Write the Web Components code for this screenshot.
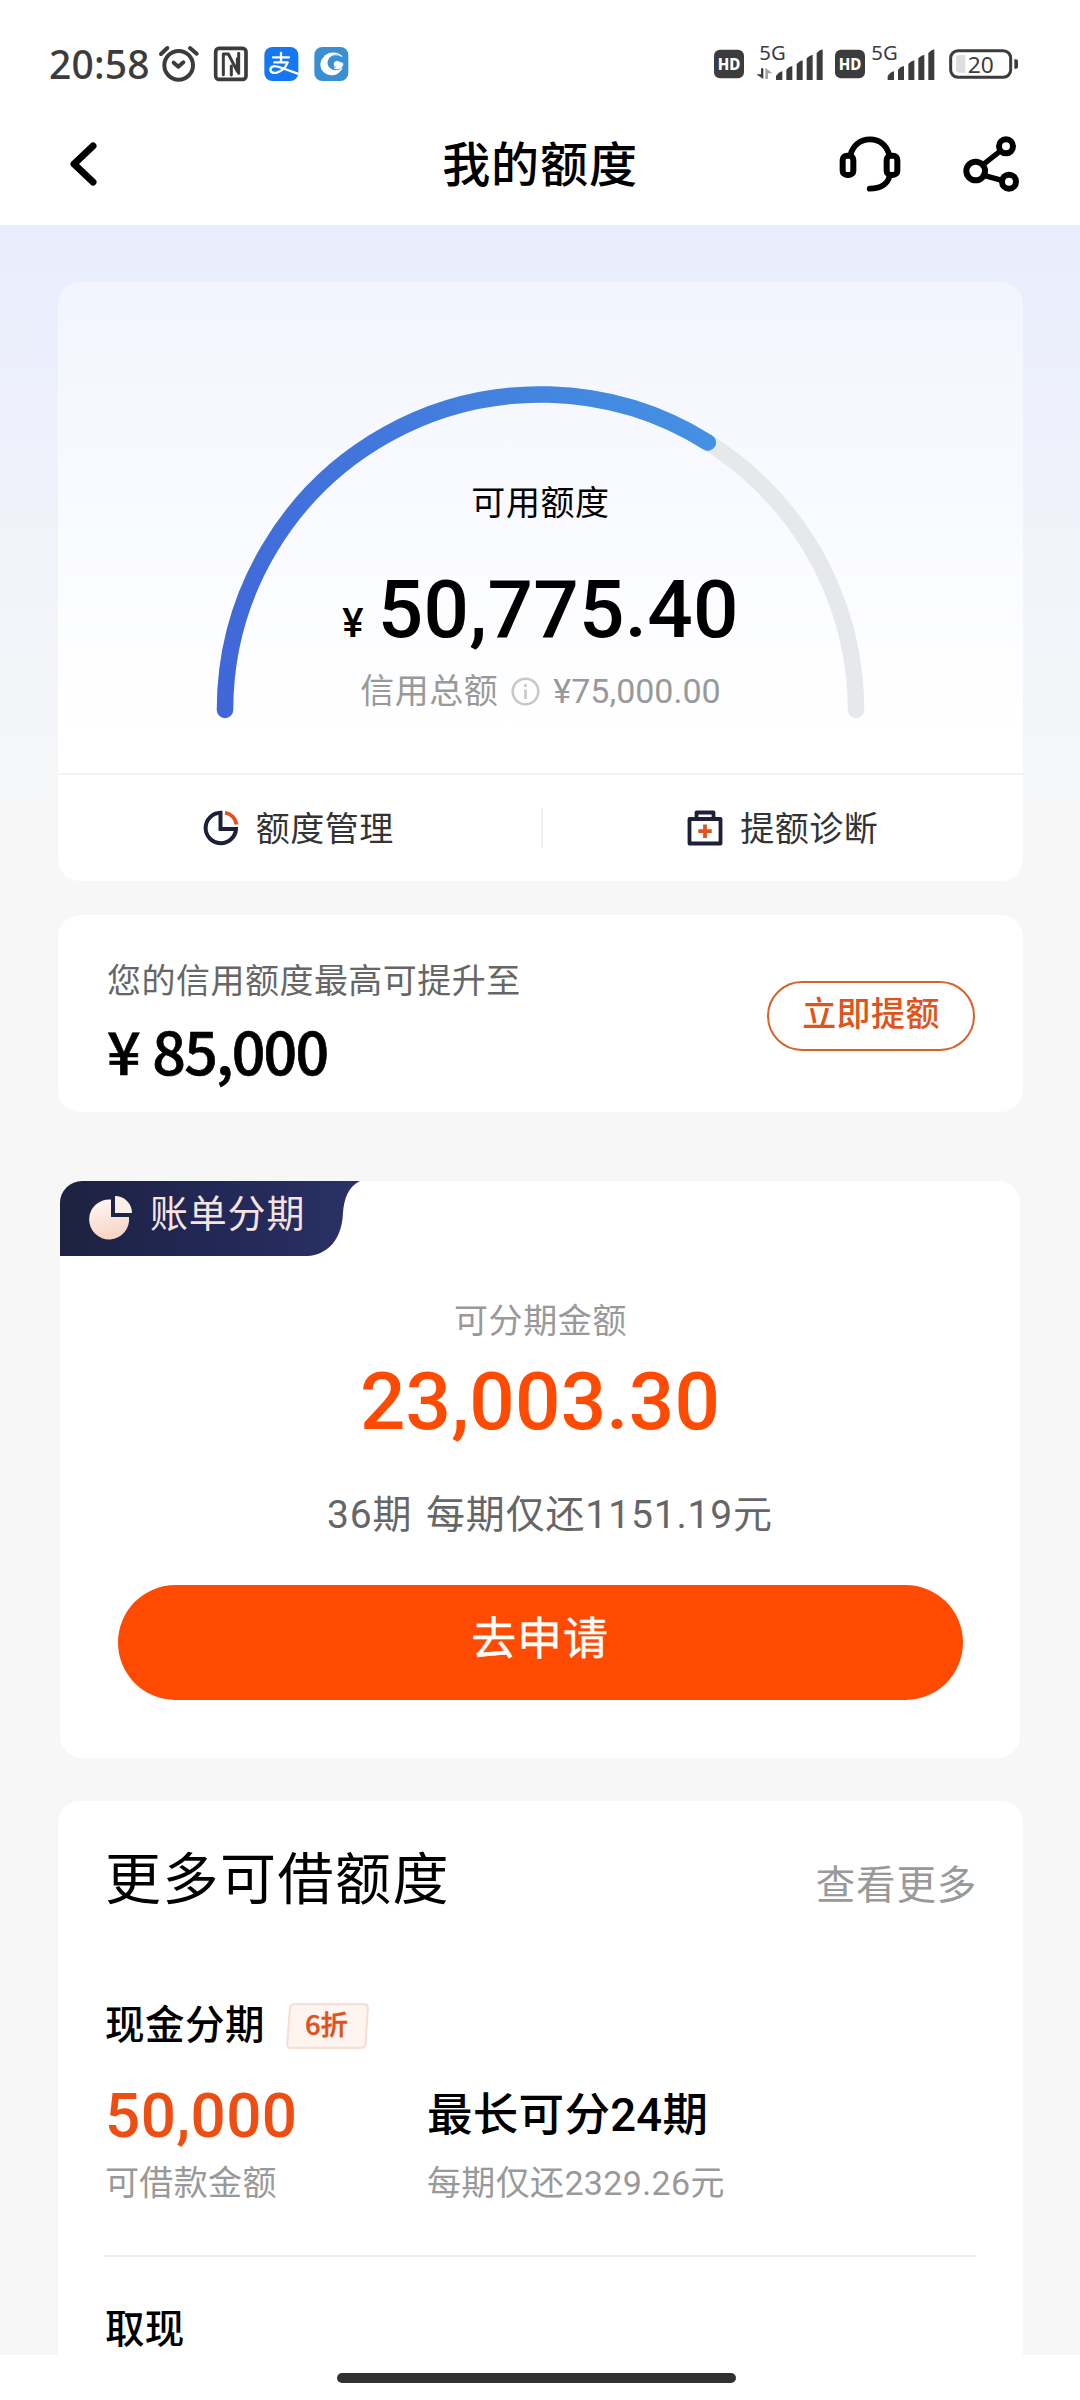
<!DOCTYPE html>
<html lang="zh-CN">
<head>
<meta charset="utf-8">
<title>我的额度</title>
<style>
  html, body { margin: 0; padding: 0; }
  body {
    width: 1080px; height: 2400px; overflow: hidden; background: #fff; color: #000;
    font-family: Roboto, "Noto Sans CJK SC", sans-serif;
  }
</style>
</head>
<body>
<quota-app></quota-app>

<script>
function define(name, html) {
  const tpl = document.createElement('template');
  tpl.innerHTML = '<style>*{box-sizing:border-box}</style>' + html;
  customElements.define(name, class extends HTMLElement {
    constructor() {
      super();
      this.attachShadow({ mode: 'open' }).appendChild(tpl.content.cloneNode(true));
    }
  });
}

define('status-bar', `
  <style>
    :host { display: flex; justify-content: space-between; align-items: flex-start; height: 103px; padding: 30px 40px 0 49px; color: #3c3c3c; }
    .left { display: flex; }
    .time { font: 500 39px/70px "Noto Sans", sans-serif; width: 106.7px; letter-spacing: 0.2px; margin-top: -1px; }
    svg { display: block; }
  </style>
  <div class="left">
    <span class="time">20:58</span>
    <svg width="200" height="70" viewBox="380 0 600 210" fill="none" stroke="#3c3c3c" stroke-linecap="round" stroke-linejoin="round">
      <circle cx="448" cy="106" r="43" stroke-width="12"/>
      <path d="M395 72L414 54M482 54L502 71" stroke-width="12"/>
      <path d="M433 98L447 110L462 97" stroke-width="12"/>
      <rect x="559" y="55" width="91" height="93" rx="10" stroke-width="11"/>
      <path d="M582 134V72H597L624 124V86" stroke-width="9"/>
      <path d="M628 70V130M606 108V135" stroke-width="9"/>
      <rect x="705" y="51" width="102" height="102" rx="24" fill="#1677f5" stroke="none"/>
      <g stroke="#fff" stroke-width="7">
        <path d="M731 82H779M755 69V97M735 97H775C769 112 757 124 742 128C728 131 721 124 724 115C728 106 744 108 758 114L805 131"/>
      </g>
      <rect x="855" y="51" width="102" height="102" rx="24" fill="#3a8fd3" stroke="none"/>
      <path d="M932 79C904 60 873 78 873 104C874 130 905 146 929 128C935 123 939 118 940 112C929 122 913 124 903 115C891 104 893 88 904 80C912 74 922 75 932 79Z" fill="#fff" stroke="none"/>
      <path d="M914 99C919 92 928 93 932 98C938 96 943 100 940 107C936 116 921 120 914 114C922 114 922 108 914 108" fill="#fff" stroke="#fff" stroke-width="2"/>
      <path d="M886 79C902 66 922 66 937 79" stroke="#fff" stroke-width="4"/>
    </svg>
  </div>
  <svg width="328" height="70" viewBox="36 0 984 210" fill="#3c3c3c" font-family="Noto Sans, sans-serif">
    <defs>
      <g id="hd"><rect x="42" y="59" width="90" height="86" rx="18"/><text x="87" y="120" text-anchor="middle" font-size="46" font-weight="800" fill="#fff" textLength="68" lengthAdjust="spacingAndGlyphs">HD</text></g>
      <g id="sig">
        <path d="M228 150V138Q236 126 247 124V150ZM259 150V119Q267 109 277 108V150ZM290 150V102Q298 93 308 91V150ZM320 150V85Q328 76 338 74V150ZM350 150V69Q358 60 368 58V150Z"/>
      </g>
    </defs>
    <use href="#hd"/>
    <text x="178" y="89" font-size="61" textLength="79" lengthAdjust="spacingAndGlyphs">5G</text>
    <path d="M183 115H190V147L169 133H183Z"/><path d="M196 147V113L217 130H204V147Z" fill="#a4a4a4"/>
    <use href="#sig"/>
    <use href="#hd" x="363"/>
    <text x="514" y="89" font-size="61" textLength="79" lengthAdjust="spacingAndGlyphs">5G</text>
    <use href="#sig" x="335"/>
    <rect x="752" y="62" width="180" height="80" rx="22" fill="none" stroke="#3c3c3c" stroke-width="9"/>
    <path d="M780 75H796V128H780Q768 128 768 116V87Q768 75 780 75Z" fill="#dedede"/>
    <text x="803" y="128" font-size="64" textLength="78" lengthAdjust="spacingAndGlyphs">20</text>
    <path d="M943 88H948Q954 88 954 94V110Q954 116 948 116H943Z"/>
  </svg>
`);

define('nav-bar', `
  <style>
    :host { display: grid; grid-template-columns: 260px 1fr 260px; align-items: center; height: 122px; }
    .title { text-align: center; font-weight: 500; font-size: 48px; line-height: 60px; letter-spacing: .9px; padding-top: 3px; }
    .back { margin-left: 64px; display: block; }
    svg { display: block; }
  </style>
  <svg class="back" width="40" height="56" viewBox="0 0 40 56" fill="none" stroke="#000" stroke-width="7" stroke-linecap="round" stroke-linejoin="round"><path d="M29 10L10 28L29 46"/></svg>
  <div class="title"><slot></slot></div>
  <svg width="210" height="80" viewBox="0 -3 630 240" fill="none" stroke="#000">
    <rect x="68" y="92" width="32" height="58" rx="13" stroke-width="18"/>
    <rect x="200" y="92" width="32" height="58" rx="13" stroke-width="18"/>
    <path d="M91 92C97 62 121 43 150 43C179 43 202 62 208 92M209 152C204 175 184 191 149 191" stroke-width="17" stroke-linecap="round"/>
    <circle cx="467" cy="138" r="28" stroke-width="18"/>
    <circle cx="558" cy="64" r="21" stroke-width="18"/>
    <circle cx="567" cy="170" r="21" stroke-width="18"/>
    <path d="M490 118L541 78M494 152L546 166" stroke-width="16"/>
  </svg>
`);

define('limit-gauge', `
  <style>
    :host { display: grid; height: 491px; }
    .arc, .info { grid-area: 1 / 1; }
    .info { display: flex; flex-direction: column; align-items: center; padding-top: 197px; }
    .label { font-size: 34px; line-height: 48px; letter-spacing: .6px; }
    .amount { margin-top: 38px; height: 90px; line-height: 90px; font-size: 80px; font-weight: 500; display: flex; align-items: baseline; gap: 14px; letter-spacing: .3px; }
    .amount small { font-size: 40px; line-height: 40px; }
    .total { margin-top: 12px; font-size: 34px; line-height: 48px; color: #999; display: flex; align-items: center; gap: 13px; }
    .total span { letter-spacing: .5px; }
  </style>
  <svg class="arc" width="965" height="491" viewBox="0 0 965 491" fill="none" stroke-width="16.500" stroke-linecap="round">
    <defs><linearGradient id="arc" gradientUnits="userSpaceOnUse" x1="167" y1="428" x2="649" y2="161"><stop stop-color="#4066d8"/><stop offset=".5" stop-color="#4278dd"/><stop offset="1" stop-color="#4490e2"/></linearGradient></defs>
    <path d="M167 428A315.500 315.500 0 0 1 798 428" stroke="#e7e8ea"/>
    <path d="M167 428A315.500 315.500 0 0 1 649.800 160.500" stroke="url(#arc)"/>
  </svg>
  <div class="info">
    <div class="label"><slot name="label"></slot></div>
    <div class="amount"><small>¥</small><slot name="amount"></slot></div>
    <div class="total"><span><slot name="total-label"></slot></span>
      <svg width="29" height="29" viewBox="0 0 29 29" fill="none" stroke="#c8c8c8" stroke-width="2.600"><circle cx="14.500" cy="14.500" r="12.800"/><path d="M14.500 12.500V22M14.500 7V10"/></svg>
      <slot name="total"></slot></div>
  </div>
`);

define('quick-action', `
  <style>
    :host { flex: 1; display: flex; justify-content: center; align-items: center; gap: 17px; font-size: 34px; line-height: 48px; letter-spacing: .5px; color: #333; }
    ::slotted(svg) { display: block; }
    span { padding-top: 2px; }
  </style>
  <slot name="icon"></slot><span><slot></slot></span>
`);

define('quota-card', `
  <style>
    :host { display: block; height: 599px; border-radius: 22px; overflow: hidden; background: linear-gradient(#f2f5fe 0, #fafbff 42%, #fff 75%); }
    .actions { display: flex; align-items: center; height: 108px; border-top: 2px solid #f3f3f3; }
    .sep { width: 2px; height: 40px; background: #f1f1f1; }
    quick-action:first-child { padding-right: 2px; }
  </style>
  <limit-gauge>
    <span slot="label">可用额度</span><span slot="amount">50,775.40</span>
    <span slot="total-label">信用总额</span><span slot="total">¥75,000.00</span>
  </limit-gauge>
  <div class="actions">
    <quick-action>
      <svg slot="icon" width="36" height="36" viewBox="0 0 36 36" fill="none" stroke-width="4"><path d="M17.500 2.800A15.200 15.200 0 1 0 33 19H17.500Z" stroke="#1c2038"/><path d="M22 2.600A14.500 14.500 0 0 1 33.500 14.500" stroke="#e0531f"/></svg>
      额度管理</quick-action>
    <div class="sep"></div>
    <quick-action>
      <svg slot="icon" width="36" height="36" viewBox="0 0 36 36" fill="none" stroke-width="3.800" stroke-linejoin="round"><path d="M2.500 9H33.500V33.500H2.500ZM9.500 9V2.500H26.500V9" stroke="#1c2038"/><path d="M18 14.500V28M11.300 21.200H24.700" stroke="#e0531f"/></svg>
      提额诊断</quick-action>
  </div>
`);

define('raise-card', `
  <style>
    :host { display: flex; justify-content: space-between; height: 197px; margin-top: 34px; padding: 0 48px 0 49px; border-radius: 22px; background: #fff; }
    .hint { margin-top: 42px; font-size: 34px; line-height: 48px; letter-spacing: .48px; color: #666; }
    .sum { margin-top: 5px; font: 500 59px/80px "Noto Sans CJK SC", sans-serif; letter-spacing: -1.800px; word-spacing: 2px; -webkit-text-stroke: .7px #000; }
    .btn { margin-top: 66px; width: 208px; height: 70px; border: 2px solid #d8622c; border-radius: 35px; color: #e0541a; font-weight: 500; font-size: 34px; line-height: 62px; letter-spacing: .4px; text-align: center; }
  </style>
  <div><div class="hint"><slot name="hint"></slot></div><div class="sum"><slot name="sum"></slot></div></div>
  <div class="btn"><slot name="action"></slot></div>
`);

define('bill-card', `
  <style>
    :host { display: flex; flex-direction: column; align-items: center; width: 960px; height: 577px; margin: 69px 0 0 2px; border-radius: 22px; overflow: hidden; background: #fff; }
    .tag { align-self: flex-start; display: grid; width: 300px; height: 75px; }
    .tag > * { grid-area: 1 / 1; }
    .tag span { padding-left: 90px; font-size: 38px; line-height: 67px; letter-spacing: .8px; color: #f5e3e2; }
    .label { margin-top: 41px; font-size: 34px; line-height: 48px; letter-spacing: .6px; color: #999; padding-left: 1px; }
    .amount { margin-top: 12px; font-size: 80px; font-weight: 500; line-height: 90px; color: #fe4b01; letter-spacing: .2px; }
    .plan { margin-top: 40px; font-size: 39px; line-height: 56px; letter-spacing: .85px; word-spacing: 3px; color: #666; padding-left: 20px; white-space: pre; }
    .btn { margin-top: 42px; width: 845px; height: 115px; border-radius: 58px; background: #ff4b02; color: #fff; font-size: 45px; line-height: 109px; letter-spacing: .8px; text-align: center; -webkit-text-stroke: .4px #fff; }
  </style>
  <div class="tag">
    <svg width="300" height="75" viewBox="0 0 300 75">
      <defs>
        <linearGradient id="bg"><stop stop-color="#1d2240"/><stop offset=".5" stop-color="#212855"/><stop offset="1" stop-color="#2a3165"/></linearGradient>
        <linearGradient id="pie" x1="0" y1="0" x2="0.300" y2="1"><stop stop-color="#fffaf6"/><stop offset="1" stop-color="#f8d5c6"/></linearGradient>
      </defs>
      <path d="M0 0H300C288 6 284 18 283 32C282 58 268 74 247 75H0Z" fill="url(#bg)"/>
      <path d="M51 18.500V36H69A20 20 0 1 1 51 18.500Z" fill="url(#pie)"/>
      <path d="M55 15A17 17 0 0 1 72 32H55Z" fill="#fcefe9"/>
    </svg>
    <span><slot name="tag"></slot></span>
  </div>
  <div class="label"><slot name="label"></slot></div>
  <div class="amount"><slot name="amount"></slot></div>
  <div class="plan"><slot name="plan"></slot></div>
  <div class="btn"><slot name="action"></slot></div>
`);

define('loan-item', `
  <style>
    :host { display: block; border-bottom: 2px solid #ececec; height: 256px; }
    .head { display: flex; align-items: center; height: 50px; gap: 21px; }
    .name { font-size: 39.500px; font-weight: 500; line-height: 50px; letter-spacing: .5px; padding-left: 1px; }
    .badge { display: grid; width: 83px; height: 46px; }
    .badge > * { grid-area: 1 / 1; }
    .badge span { text-align: center; font: 500 27.500px/40px "Noto Sans CJK SC", sans-serif; color: #e0511d; padding-right: 2px; -webkit-text-stroke: .4px #e0511d; }
    .cols { display: grid; grid-template-columns: 322px 1fr; margin-top: 31px; padding-left: 1px; }
    .big { font-size: 62px; font-weight: 500; line-height: 68px; letter-spacing: .4px; color: #ef4e12; }
    .term { font-size: 45.500px; font-weight: 500; line-height: 68px; letter-spacing: .3px; }
    .sub { font-size: 34px; line-height: 48px; letter-spacing: .35px; color: #999; margin-top: 9px; }
  </style>
  <div class="head">
    <span class="name"><slot name="name"></slot></span>
    <div class="badge">
      <svg width="83" height="46" viewBox="0 0 83 46"><path d="M9 1.200H78Q82 1.200 81.800 5L79.500 41Q79.200 44.800 75 44.800H5Q1 44.800 1.200 41L4 5Q4.500 1.200 9 1.200Z" fill="#fef5f0" stroke="#f7dfd5" stroke-width="2.200"/></svg>
      <span><slot name="badge"></slot></span>
    </div>
  </div>
  <div class="cols">
    <div><div class="big"><slot name="amount"></slot></div><div class="sub"><slot name="amount-label"></slot></div></div>
    <div><div class="term"><slot name="term"></slot></div><div class="sub"><slot name="term-label"></slot></div></div>
  </div>
`);

define('more-card', `
  <style>
    :host { display: block; height: 560px; margin-top: 43px; padding: 40px 47px 0 46px; border-radius: 22px 22px 0 0; background: #fff; }
    .head { display: flex; justify-content: space-between; height: 80px; padding-left: 1px; margin-bottom: 80px; }
    .title { font-size: 56px; line-height: 78px; letter-spacing: 1.500px; }
    .more { font-size: 39.500px; line-height: 80px; letter-spacing: .8px; color: #999; padding-top: 5px; margin-right: -1px; }
    .next { margin-top: 45px; font-size: 39.500px; font-weight: 500; line-height: 56px; letter-spacing: .3px; padding-left: 1px; }
  </style>
  <div class="head"><span class="title">更多可借额度</span><span class="more">查看更多</span></div>
  <loan-item>
    <span slot="name">现金分期</span><span slot="badge">6折</span>
    <span slot="amount">50,000</span><span slot="amount-label">可借款金额</span>
    <span slot="term">最长可分24期</span><span slot="term-label">每期仅还2329.26元</span>
  </loan-item>
  <div class="next">取现</div>
`);

define('home-bar', `
  <style>
    :host { display: flex; justify-content: center; height: 45px; padding: 17.500px 7px 0 0; background: #fff; }
    i { width: 399px; height: 10px; border-radius: 5px; background: #313131; }
  </style><i></i>
`);

define('quota-app', `
  <style>
    :host { display: flex; flex-direction: column; height: 2400px; background: #fff; }
    main { height: 2130px; overflow: hidden; padding: 57px 57px 0 58px; background: linear-gradient(#e8edfd 0, #eef1fb 200px, #f3f5fa 420px, #f7f7f7 640px); }
  </style>
  <status-bar></status-bar>
  <nav-bar>我的额度</nav-bar>
  <main>
    <quota-card></quota-card>
    <raise-card><span slot="hint">您的信用额度最高可提升至</span><span slot="sum">¥ 85,000</span><span slot="action">立即提额</span></raise-card>
    <bill-card><span slot="tag">账单分期</span><span slot="label">可分期金额</span><span slot="amount">23,003.30</span><span slot="plan">36期 每期仅还1151.19元</span><span slot="action">去申请</span></bill-card>
    <more-card></more-card>
  </main>
  <home-bar></home-bar>
`);
</script>
</body>
</html>
